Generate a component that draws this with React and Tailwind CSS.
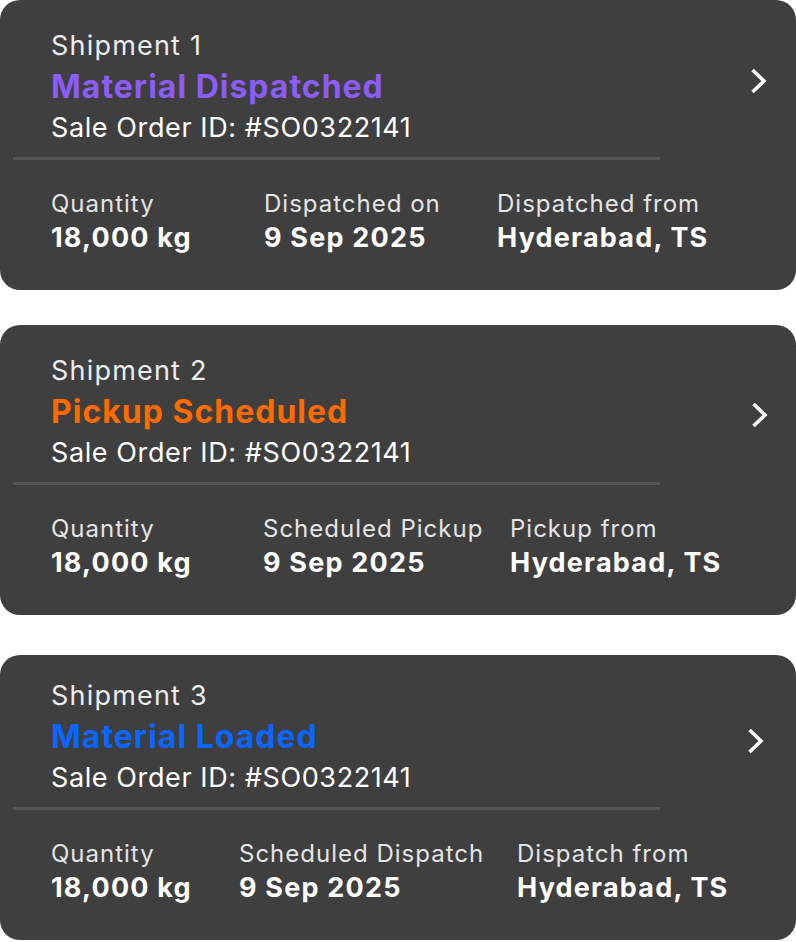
const shipments = [
  {
    id: 1,
    status: 'Material Dispatched',
    statusColor: 'text-[#8b5cf6]',
    cols: 'grid-cols-[213px_233px_auto]',
    pad: 'pt-[25px]',
    chevron: 'mt-[43px] mr-[29px]',
    fields: [
      { label: 'Quantity', value: '18,000 kg' },
      { label: 'Dispatched on', value: '9 Sep 2025' },
      { label: 'Dispatched from', value: 'Hyderabad, TS' },
    ],
  },
  {
    id: 2,
    status: 'Pickup Scheduled',
    statusColor: 'text-[#ff6a00]',
    cols: 'grid-cols-[212px_247px_auto]',
    pad: 'pt-[25px]',
    chevron: 'mt-[52px] mr-[28px]',
    fields: [
      { label: 'Quantity', value: '18,000 kg' },
      { label: 'Scheduled Pickup', value: '9 Sep 2025' },
      { label: 'Pickup from', value: 'Hyderabad, TS' },
    ],
  },
  {
    id: 3,
    status: 'Material Loaded',
    statusColor: 'text-[#0a66ff]',
    cols: 'grid-cols-[188px_278px_auto]',
    pad: 'pt-[20px]',
    chevron: 'mt-[53px] mr-[32px]',
    fields: [
      { label: 'Quantity', value: '18,000 kg' },
      { label: 'Scheduled Dispatch', value: '9 Sep 2025' },
      { label: 'Dispatch from', value: 'Hyderabad, TS' },
    ],
  },
]

function Chevron({ className }) {
  return (
    <svg className={className} width="17" height="26" viewBox="0 0 17 26" fill="none">
      <polyline points="2.5,2 14,13 2.5,24" stroke="white" strokeWidth="3.6" strokeLinejoin="miter" />
    </svg>
  )
}

function ShipmentCard({ shipment }) {
  return (
    <div className={`rounded-[20px] bg-[#3f3f3f] ${shipment.pad} pb-[34px]`}>
      <div className="flex items-start justify-between pl-[51px]">
        <div>
          <p className="text-[27px] leading-[41px] tracking-[1.2px] text-[#ececec]">Shipment {shipment.id}</p>
          <p className={`text-[32px] leading-[41px] tracking-[1px] font-bold ${shipment.statusColor}`}>{shipment.status}</p>
          <p className="text-[27px] leading-[41px] tracking-[0.6px] text-white">Sale Order ID: #SO0322141</p>
        </div>
        <Chevron className={shipment.chevron} />
      </div>

      <div className="ml-[13px] mt-[9px] w-[647px] h-[3px] bg-[#555555]" />

      <div className={`grid ${shipment.cols} pl-[51px] pt-[28px]`}>
        {shipment.fields.map((f) => (
          <div key={f.label}>
            <p className="text-[24px] leading-[32px] tracking-[1px] text-[#e4e4e4]">{f.label}</p>
            <p className="text-[27px] leading-[36px] tracking-[1.2px] font-bold text-white">{f.value}</p>
          </div>
        ))}
      </div>
    </div>
  )
}

export default function App() {
  return (
    <div className="w-[796px] bg-white font-['Inter',sans-serif]">
      <div className="flex flex-col">
        <ShipmentCard shipment={shipments[0]} />
        <div className="h-[35px]" />
        <ShipmentCard shipment={shipments[1]} />
        <div className="h-[40px]" />
        <ShipmentCard shipment={shipments[2]} />
      </div>
    </div>
  )
}
